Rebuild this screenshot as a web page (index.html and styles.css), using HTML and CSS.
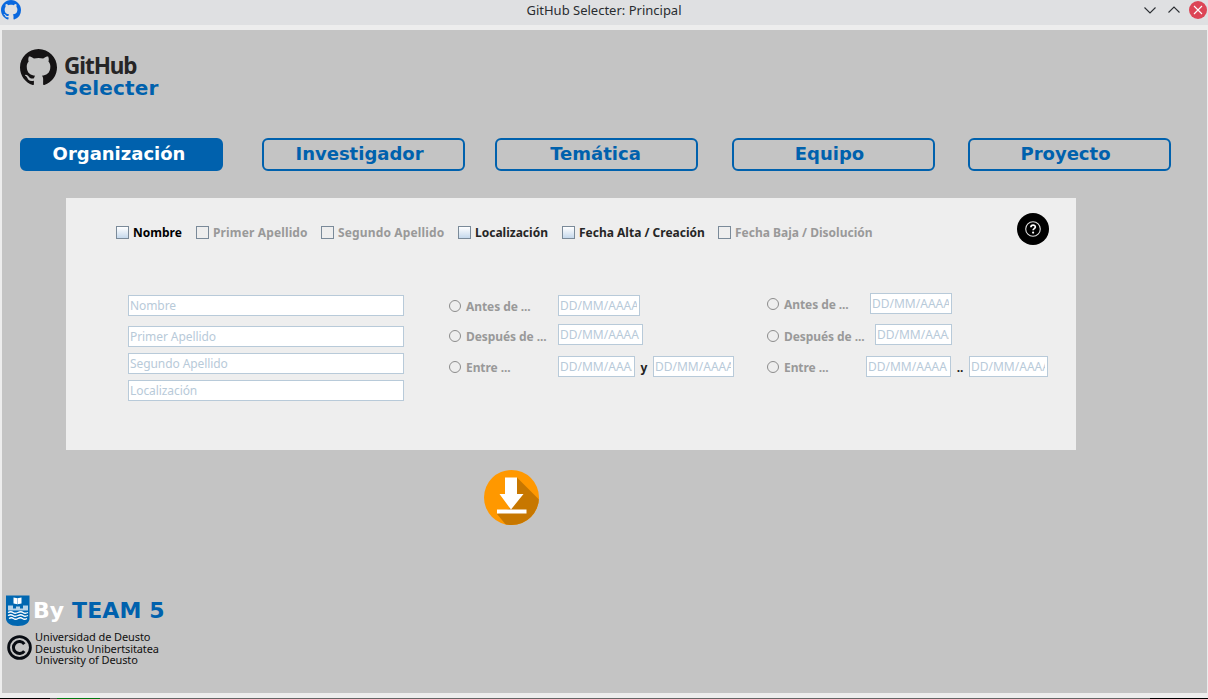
FILE: index.html
```html
<!DOCTYPE html>
<html lang="es">
<head>
<meta charset="utf-8">
<title>GitHub Selecter: Principal</title>
<link rel="stylesheet" href="styles.css">
</head>
<body>
<svg class="defs" width="0" height="0">
  <symbol id="octocat" viewBox="0 0 16 16"><path d="M8 0C3.58 0 0 3.58 0 8c0 3.54 2.29 6.53 5.47 7.59.4.07.55-.17.55-.38 0-.19-.01-.82-.01-1.49-2.01.37-2.53-.49-2.69-.94-.09-.23-.48-.94-.82-1.13-.28-.15-.68-.52-.01-.53.63-.01 1.08.58 1.23.82.72 1.21 1.87.87 2.33.66.07-.52.28-.87.51-1.07-1.78-.2-3.64-.89-3.64-3.95 0-.87.31-1.59.82-2.15-.08-.2-.36-1.02.08-2.12 0 0 .67-.21 2.2.82.64-.18 1.32-.27 2-.27s1.36.09 2 .27c1.53-1.04 2.2-.82 2.2-.82.44 1.1.16 1.92.08 2.12.51.56.82 1.27.82 2.15 0 3.07-1.87 3.75-3.65 3.95.29.25.54.73.54 1.48 0 1.07-.01 1.93-.01 2.2 0 .21.15.46.55.38A8.01 8.01 0 0 0 16 8c0-4.42-3.58-8-8-8z"/></symbol>
</svg>
<div class="window">
  <header class="titlebar">
    <svg class="app-icon"><use href="#octocat"/></svg>
    <span class="title">GitHub Selecter: Principal</span>
    <svg class="controls" width="66" height="25" viewBox="1142 0 66 25" fill="none">
      <path d="M1144.5 7.5l5.5 5.5 5.5-5.5M1168.5 12.5l5.500-5.500 5.500 5.500" stroke="#2c3034" stroke-width="1.1"/>
      <circle cx="1198" cy="10" r="9" fill="#dc4556"/>
      <path d="M1194 6l8 8M1202 6l-8 8" stroke="#fff" stroke-width="1.1"/>
    </svg>
  </header>
  <main class="content">
    <div class="brand">
      <svg class="brand-icon"><use href="#octocat"/></svg>
      <div class="brand-text"><span class="brand-git">GitHub</span><span class="brand-sel">Selecter</span></div>
    </div>
    <nav class="tabs">
      <div class="tab active">Organización</div>
      <div class="tab shifted">Investigador</div>
      <div class="tab near">Temática</div>
      <div class="tab shifted">Equipo</div>
      <div class="tab shifted">Proyecto</div>
    </nav>
    <section class="panel">
      <div class="filters">
        <div class="checks">
          <label class="check"><i class="box"></i>Nombre</label>
          <label class="check off wide"><i class="box"></i>Primer Apellido</label>
          <label class="check off wide"><i class="box"></i>Segundo Apellido</label>
          <label class="check dark"><i class="box"></i>Localización</label>
          <label class="check dark"><i class="box"></i>Fecha Alta / Creación</label>
          <label class="check off"><i class="box"></i>Fecha Baja / Disolución</label>
        </div>
        <svg class="help" width="32" height="32" viewBox="0 0 32 32">
          <circle cx="16" cy="16" r="16"/>
          <circle cx="16" cy="16" r="7.300" fill="none" stroke="#ddd" stroke-width="1.100"/>
          <path d="M13.900 14.300c0-2.900 4.600-2.800 4.400-.2-.1 1.500-2.200 1.500-2.200 3.200" fill="none" stroke="#fff" stroke-width="1.700"/>
          <circle cx="16.100" cy="19.600" r="1.100" fill="#fff"/>
        </svg>
      </div>
      <div class="form">
        <div class="names">
          <div class="field first">Nombre</div>
          <div class="field">Primer Apellido</div>
          <div class="field">Segundo Apellido</div>
          <div class="field">Localización</div>
        </div>
        <div class="dates alta">
          <div class="row r1"><i class="radio"></i><span class="opt">Antes de ...</span><div class="field w82"><span>DD/MM/AAAA</span></div></div>
          <div class="row r2"><i class="radio"></i><span class="opt">Después de ...</span><div class="field w85"><span>DD/MM/AAAA</span></div></div>
          <div class="row r3"><i class="radio"></i><span class="opt">Entre ...</span><div class="field w77"><span>DD/MM/AAAA</span></div><b class="sep">y</b><div class="field w81"><span>DD/MM/AAAA</span></div></div>
        </div>
        <div class="dates baja">
          <div class="row r1"><i class="radio"></i><span class="opt o1">Antes de ...</span><div class="field w82"><span>DD/MM/AAAA</span></div></div>
          <div class="row r2"><i class="radio"></i><span class="opt o2">Después de ...</span><div class="field w77"><span>DD/MM/AAAA</span></div></div>
          <div class="row r3"><i class="radio"></i><span class="opt o3">Entre ...</span><div class="field w85"><span>DD/MM/AAAA</span></div><b class="sep">..</b><div class="field w79"><span>DD/MM/AAAA</span></div></div>
        </div>
      </div>
    </section>
    <svg class="download" width="55" height="55" viewBox="0 0 55 55">
      <defs><clipPath id="disc"><circle cx="27.500" cy="27.500" r="27.500"/></clipPath></defs>
      <g clip-path="url(#disc)">
        <path d="M0 0h55v55H0z" fill="#ff9800"/>
        <path d="M33 7.500l25 25v26H25L13 44l14-6z" fill="#c77700"/>
      </g>
      <path d="M21 7.500h12V24h6.500L27 39.500 15.500 24H21zM13 39.500h29.500v4H13z" fill="#fff"/>
    </svg>
    <footer class="credits">
      <div class="team">
        <svg width="24" height="32" viewBox="0 0 24 32">
          <path d="M0 .500h23.500v23c0 4-4 7.500-11.700 7.500S0 27.500 0 23.500z" fill="#0067b1"/>
          <path d="M7.500 2.500l4 .8 4-.8v6l-4 .8-4-.8z" fill="#fff"/><path d="M11.500 3v6" stroke="#76abd4" stroke-width=".7"/>
          <path d="M2 10.500h5v3h3v-2h4v2h3v-3h5v5H2z" fill="#b7d3e8"/>
          <path d="M2 17.500q3-1.500 5 0t5 0 5 0 5 0M2 20.500q3-1.500 5 0t5 0 5 0 5 0M3 23.500q2.500-1.500 4.500 0t4.500 0 4.500 0 4.500 0" fill="none" stroke="#fff" stroke-width="1.300"/>
        </svg>
        <span class="by">By <em>TEAM 5</em></span>
      </div>
      <div class="copyright">
        <svg width="25" height="25" viewBox="0 0 25 25" fill="none" stroke="#080c12">
          <circle cx="12.500" cy="12.500" r="10.900" stroke-width="2.800"/><path d="M17.300 9a6 6 0 1 0 0 7" stroke-width="3"/>
        </svg>
        <div class="university"><span>Universidad de Deusto</span><span>Deustuko Unibertsitatea</span><span>University of Deusto</span></div>
      </div>
    </footer>
  </main>
  <div class="taskbar"></div>
</div>
</body>
</html>
```
FILE: styles.css
```css
* { box-sizing: border-box; }
body { margin: 0; width: 1208px; height: 699px; overflow: hidden; font-family: "Noto Sans", sans-serif; }
.defs { display: block; position: absolute; }
.window { height: 699px; background: #ededed; display: flex; flex-direction: column; }
.titlebar { height: 25px; background: #dfe0e2; display: grid; grid-template-columns: 66px 1fr 66px; }
.app-icon { width: 20px; height: 20px; margin-left: 1px; fill: #0968df; }
.title { text-align: center; font-size: 13px; line-height: 21px; color: #292c30; }
.content { height: 663px; margin: 5px 1px 5px 2px; background: #c4c4c4; display: flex; flex-direction: column; }
.taskbar { height: 1px; background: linear-gradient(90deg, #000 50px, #555 50px 57px, #071 57px 100px, #666 100px 1150px, #000 1150px); }

.brand { height: 108px; padding: 19px 0 0 18px; display: flex; gap: 7px; }
.brand-icon { width: 37px; height: 37px; fill: #151314; }
.brand-text { display: flex; flex-direction: column; padding-top: 6px; font-weight: bold; }
.brand-git { font-size: 22.5px; line-height: 22px; letter-spacing: -1.05px; color: #262526; }
.brand-sel { padding-top: 1px; font: bold 20px/20px "DejaVu Sans", sans-serif; letter-spacing: .15px; color: #0061ad; }

.tabs { display: grid; grid-template-columns: 242px 233px 237px 236px 203px; padding-left: 18px; height: 60px; }
.tab { width: 203px; height: 33px; border: 2px solid #0061ad; border-radius: 6px; color: #0061ad; text-align: center; font: bold 18px/28px "DejaVu Sans", sans-serif; }
.active { background: #0061ad; color: #fff; padding-right: 5px; }
.shifted { padding-right: 8px; }
.near { padding-right: 2px; }

.panel { width: 1010px; height: 252px; margin-left: 64px; background: #eee; }
.filters { height: 95px; padding: 15px 27px 0 50px; display: flex; justify-content: space-between; }
.checks { display: grid; grid-template-columns: 80px 125px 137px 104px 156px 180px; height: 39px; }
.check { display: flex; align-items: center; gap: 4px; height: 39px; font-size: 12px; font-weight: bold; white-space: nowrap; color: #000; }
.wide { letter-spacing: .14px; }
.dark { color: #262626; }
.off { color: #999; }
.box { width: 13px; height: 13px; border: 1px solid #7a8a99; background: linear-gradient(#fff, #c5d8ec); }
.off .box { background: #eee; }

.form { display: flex; padding-left: 62px; }
.names { width: 321px; padding-top: 2px; display: flex; flex-direction: column; gap: 6px; }
.names .field { width: 276px; letter-spacing: -.08px; }
.first { margin-bottom: 4px; }
.field { height: 21px; flex-shrink: 0; padding: 0 1px; border: 1px solid #b8cad9; background: #fff; color: #b8cad9; font-size: 12px; line-height: 19px; white-space: nowrap; }
.field span { display: block; overflow: hidden; margin-right: 1px; }
.dates { display: flex; flex-direction: column; }
.alta { width: 318px; padding-top: 2px; }
.baja { padding-top: 0; }
.row { display: flex; align-items: center; height: 21px; }
.alta .r1 { margin-bottom: 8px; }
.baja .r1 { margin-bottom: 10px; }
.r2 { margin-bottom: 11px; }
.radio { width: 12px; height: 12px; border: 1px solid #8c8c8c; border-radius: 50%; flex-shrink: 0; }
.r2 .radio { margin-top: 2px; }
.opt { width: 92px; margin-left: 5px; padding-top: 3px; font-size: 12px; line-height: 18px; letter-spacing: -.08px; font-weight: bold; color: #999; white-space: nowrap; }
.r2 .opt { padding-top: 4px; }
.o1 { width: 86px; }
.o2 { width: 91px; }
.o3 { width: 82px; }
.w77 { width: 77px; }
.w79 { width: 79px; }
.w81 { width: 81px; }
.w82 { width: 82px; }
.w85 { width: 85px; }
.sep { width: 18px; text-align: center; font-size: 12px; color: #222; padding-top: 2px; }

.download { margin: 20px 0 0 482px; }
.credits { margin: 70px 0 0 4px; }
.team { display: flex; height: 38px; gap: 3px; }
.by { font: bold 22px/31px "DejaVu Sans", sans-serif; letter-spacing: .1px; color: #fff; white-space: nowrap; }
.by em { font-style: normal; color: #0061ad; }
.copyright { display: flex; gap: 3px; padding: 2px 0 0 1px; }
.university { display: flex; flex-direction: column; font-size: 11px; line-height: 11.500px; letter-spacing: -.1px; color: #111; margin-top: -4px; }
```
